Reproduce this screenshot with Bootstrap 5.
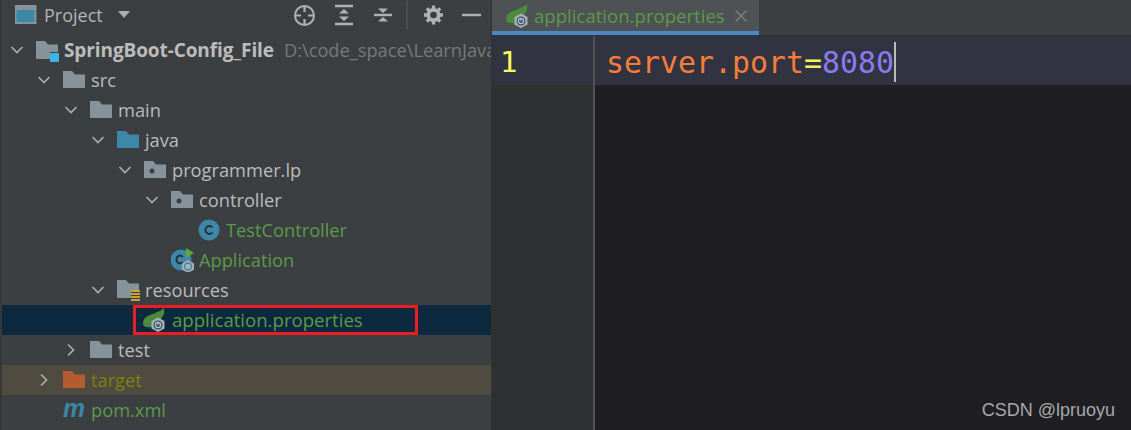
<!DOCTYPE html>
<html lang="en"><head><meta charset="utf-8"><title>application.properties</title>
<link href="https://cdn.jsdelivr.net/npm/bootstrap@5.3.0/dist/css/bootstrap.min.css" rel="stylesheet">
<style>
html,body{height:430px;overflow:hidden;background:#3c3f41}
body{font-family:"Open Sans","Liberation Sans",sans-serif;font-size:18.25px;color:#bbb}
svg{display:block;flex:none}
.ide{height:430px;position:relative}
.side{width:491px;flex:none;background:#3c3f41;border-left:2px solid #353739;overflow:hidden}
.head{height:35px;padding:0 0 5px 13px}
.head-title{margin-left:7px;color:#b4b4b4;width:65px;font-size:18px}
.tools{margin-left:162px}
.gap-a{margin-left:19px}.gap-b{margin-left:21px}.gap-c{margin-left:14px}.gap-d{margin-left:16px}
.tsep{width:2px;height:28px;background:#4c4f51}
.tree-row{height:30px;white-space:nowrap;flex:none}
.lv0{padding-left:8px}.lv1{padding-left:35px}.lv2{padding-left:62px}.lv3{padding-left:89px}.lv4{padding-left:116px}.lv5{padding-left:143px}.lv6{padding-left:170px}
.chev{width:14px;margin-right:12px}
.noch{margin-left:26px}
.lbl{margin-left:6px;line-height:30px}
.lbl-tight{margin-left:4px}
.root-name{font-weight:700;color:#bcbcbc;font-size:19px;letter-spacing:-.1px}
.root-path{color:#787878;margin-left:10px}
.vcs{color:#5b9a49}
.ign{color:#7f7f10}
.picked{background:#0d293e}
.redbox{margin-left:131px;width:285px;height:30px;border:3px solid #ed1c24;padding-left:6px}
.redbox .lbl{line-height:24px;font-size:18.6px}
.excl{background:#4f4b41}
.main-pane{flex:1;background:#1f1e23;border-left:1px solid #323335}
.tabbar{height:36px;background:#3c3f41;border-bottom:1px solid #323232}
.tab1{width:267px;height:35px;background:#4e5254;border-bottom:4px solid #4a88c7;padding-left:13px}
.tab-name{margin-left:5px;color:#5b9a49;width:201px;font-size:18.6px}
.gut{width:103px;background:#2f3032;border-right:2px solid #505254;flex:none}
.gut-top{height:49px;background:#313341;padding-left:8px;font:400 29px/53px "DejaVu Sans Mono",monospace;color:#f8f860}
.gut-rest{height:345px}
.code-col{flex:1}
.code-top{height:49px;background:#323340;padding-left:11px;font:29.9px/53px "DejaVu Sans Mono","Liberation Mono",monospace;white-space:nowrap}
.ckey{color:#f67e3a}.ceq{color:#f2f25e}.cval{color:#8a7cf0}
.caret{display:inline-block;width:2px;height:40px;background:#bbb;vertical-align:-9px}
.mark-wm{position:absolute;right:16px;bottom:8px;font:18px/24px "Liberation Sans",sans-serif;color:#a8a8a8}
</style></head><body>
<svg width="0" height="0" style="position:absolute">
<defs>
<symbol id="i-chev-d" viewBox="0 0 14 14"><path d="M1.5 4l5.500 5.500L12.500 4" fill="none" stroke="#a9adb0" stroke-width="1.700"/></symbol>
<symbol id="i-chev-r" viewBox="0 0 14 14"><path d="M4 1.500L9.500 7 4 12.500" fill="none" stroke="#a9adb0" stroke-width="1.700"/></symbol>
<symbol id="i-folder" viewBox="0 0 22 22"><path d="M0 2h9l3 3.500h10V19H0z" fill="#87939a"/></symbol>
<symbol id="i-blue" viewBox="0 0 22 22"><path d="M0 2h9l3 3.500h10V19H0z" fill="#3d87a8"/></symbol>
<symbol id="i-orange" viewBox="0 0 22 22"><path d="M0 2h9l3 3.500h10V19H0z" fill="#b35c30"/></symbol>
<symbol id="i-pkg" viewBox="0 0 22 22"><path d="M0 2h9l3 3.500h10V19H0z" fill="#87939a"/><circle cx="8" cy="12" r="2.500" fill="#3c3f41"/></symbol>
<symbol id="i-res" viewBox="0 0 24 24"><path d="M0 2h9l3 3.500h10V12h-8v8H0z" fill="#87939a"/><path d="M14 13h9M14 16h9M14 19h9M14 22h9" stroke="#c9a13b" stroke-width="1.800"/></symbol>
<symbol id="i-root" viewBox="0 0 24 24"><path d="M0 3h9l3 3.500h10V14h-8v7H0z" fill="#87939a"/><rect x="14" y="15" width="9" height="9" fill="#3cb4e6"/></symbol>
<symbol id="i-class" viewBox="0 0 22 22"><circle cx="11" cy="11" r="10.500" fill="#3d87a8"/><path d="M14.500 8.500a4 4 0 1 0 0 5" fill="none" stroke="#2b2d30" stroke-width="1.800"/></symbol>
<symbol id="i-app" viewBox="0 0 24 24"><circle cx="10" cy="12" r="10.500" fill="#3d87a8"/><path d="M12 9a3.800 3.800 0 1 0 0 5" fill="none" stroke="#2b2d30" stroke-width="1.800"/><path d="M15 0l8 5-8 5z" fill="#59a83a"/><path d="M17 12l6 3.500v6L17 25l-6-3.500v-6z" fill="#a9b0b5"/><circle cx="17" cy="18.500" r="3.500" fill="none" stroke="#3d87a8" stroke-width="1.400"/></symbol>
<symbol id="i-spring" viewBox="0 0 24 24"><path d="M1 15C1 8 9 7 13 5c4-1.500 7-3 9-5 1 5-1 9-4 12l-8 7C5 20 1 19 1 15z" fill="#4d8a3c"/><path d="M16 9.500l6.500 3.500v7.500L16 24l-6.500-3.500V13z" fill="#a9b0b5"/><circle cx="16" cy="17" r="4.500" fill="#33566a"/><circle cx="16" cy="17" r="2.600" fill="none" stroke="#b8c0c6" stroke-width="1.200"/><path d="M16 14v3" stroke="#b8c0c6" stroke-width="1.200"/></symbol>
<symbol id="i-maven" viewBox="0 0 22 22"><text x="0" y="18" font-family="Liberation Sans" font-style="italic" font-weight="700" font-size="26" fill="#3d87a8" textLength="22" lengthAdjust="spacingAndGlyphs">m</text></symbol>
</defs></svg>
<div class="ide d-flex">
<aside class="side d-flex flex-column">
<div class="head d-flex align-items-center">
<svg width="22" height="20" viewBox="0 0 22 20"><rect x=".5" y="1" width="20" height="17" fill="#3d87a8" stroke="#87939a" stroke-width="2"/><path d="M1 3.500h20" stroke="#87939a" stroke-width="3"/></svg>
<span class="head-title">Project</span>
<svg class="ms-2" width="14" height="8" viewBox="0 0 14 8"><path d="M1 0h12L7 7z" fill="#a9adb0"/></svg>
<div class="tools d-flex align-items-center">
<svg width="23" height="23" viewBox="0 0 23 23"><circle cx="11.500" cy="11.500" r="9.500" fill="none" stroke="#aeb2b5" stroke-width="2"/><path d="M11.500 2v6M11.500 15v6M2 11.500h6M15 11.500h6" stroke="#aeb2b5" stroke-width="2.200"/></svg>
<svg class="gap-a" width="18" height="22" viewBox="0 0 18 22"><path d="M0 2h18M0 20h18" stroke="#aeb2b5" stroke-width="2.400"/><path d="M9 5l5 4.500H4zM9 17l5-4.500H4z" fill="#aeb2b5"/></svg>
<svg class="gap-b" width="18" height="22" viewBox="0 0 18 22"><path d="M0 11h18" stroke="#aeb2b5" stroke-width="2.400"/><path d="M9 9L4 4.500h10zM9 13l5 4.500H4z" fill="#aeb2b5"/></svg>
<span class="tsep gap-c"></span>
<svg class="gap-d" width="19" height="20" viewBox="0 0 20 20"><circle cx="10" cy="10" r="5.500" fill="none" stroke="#aeb2b5" stroke-width="4"/><path d="M10 0v4M10 16v4M0 10h4M16 10h4M3 3l3 3M14 14l3 3M17 3l-3 3M6 14l-3 3" stroke="#aeb2b5" stroke-width="3.500"/></svg>
<svg class="gap-a" width="19" height="4" viewBox="0 0 19 4"><path d="M0 2h19" stroke="#aeb2b5" stroke-width="2.400"/></svg>
</div>
</div>
<div class="tree-row lv0 d-flex align-items-center"><svg class="chev" height="14"><use href="#i-chev-d"/></svg><svg width="24" height="24"><use href="#i-root"/></svg><span class="lbl lbl-tight root-name">SpringBoot-Config_File</span><span class="root-path">D:\code_space\LearnJava</span></div>
<div class="tree-row lv1 d-flex align-items-center"><svg class="chev" height="14"><use href="#i-chev-d"/></svg><svg width="22" height="22"><use href="#i-folder"/></svg><span class="lbl">src</span></div>
<div class="tree-row lv2 d-flex align-items-center"><svg class="chev" height="14"><use href="#i-chev-d"/></svg><svg width="22" height="22"><use href="#i-folder"/></svg><span class="lbl">main</span></div>
<div class="tree-row lv3 d-flex align-items-center"><svg class="chev" height="14"><use href="#i-chev-d"/></svg><svg width="22" height="22"><use href="#i-blue"/></svg><span class="lbl">java</span></div>
<div class="tree-row lv4 d-flex align-items-center"><svg class="chev" height="14"><use href="#i-chev-d"/></svg><svg width="22" height="22"><use href="#i-pkg"/></svg><span class="lbl">programmer.lp</span></div>
<div class="tree-row lv5 d-flex align-items-center"><svg class="chev" height="14"><use href="#i-chev-d"/></svg><svg width="22" height="22"><use href="#i-pkg"/></svg><span class="lbl">controller</span></div>
<div class="tree-row lv6 d-flex align-items-center"><span class="noch"></span><svg width="22" height="22"><use href="#i-class"/></svg><span class="lbl vcs">TestController</span></div>
<div class="tree-row lv5 d-flex align-items-center"><span class="noch"></span><svg width="24" height="24"><use href="#i-app"/></svg><span class="lbl lbl-tight vcs">Application</span></div>
<div class="tree-row lv3 d-flex align-items-center"><svg class="chev" height="14"><use href="#i-chev-d"/></svg><svg width="24" height="24"><use href="#i-res"/></svg><span class="lbl lbl-tight">resources</span></div>
<div class="tree-row picked d-flex align-items-center"><div class="redbox d-flex align-items-center"><svg width="24" height="24"><use href="#i-spring"/></svg><span class="lbl vcs">application.properties</span></div></div>
<div class="tree-row lv2 d-flex align-items-center"><svg class="chev" height="14"><use href="#i-chev-r"/></svg><svg width="22" height="22"><use href="#i-folder"/></svg><span class="lbl">test</span></div>
<div class="tree-row lv1 excl d-flex align-items-center"><svg class="chev" height="14"><use href="#i-chev-r"/></svg><svg width="22" height="22"><use href="#i-orange"/></svg><span class="lbl ign">target</span></div>
<div class="tree-row lv1 d-flex align-items-center"><span class="noch"></span><svg width="22" height="22"><use href="#i-maven"/></svg><span class="lbl vcs">pom.xml</span></div>
</aside>
<main class="main-pane d-flex flex-column">
<div class="tabbar d-flex">
<div class="tab1 d-flex align-items-center"><svg width="24" height="24"><use href="#i-spring"/></svg><span class="tab-name">application.properties</span><svg width="12" height="12" viewBox="0 0 12 12"><path d="M.5.5l11 11M11.500.5l-11 11" stroke="#7b7f82" stroke-width="1.500"/></svg></div>
</div>
<div class="d-flex flex-grow-1">
<div class="gut"><div class="gut-top">1</div><div class="gut-rest"></div></div>
<div class="code-col"><div class="code-top"><span class="ckey">server.port</span><span class="ceq">=</span><span class="cval">8080</span><span class="caret"></span></div></div>
</div>
</main>
<span class="mark-wm">CSDN @lpruoyu</span>
</div>
</body></html>
